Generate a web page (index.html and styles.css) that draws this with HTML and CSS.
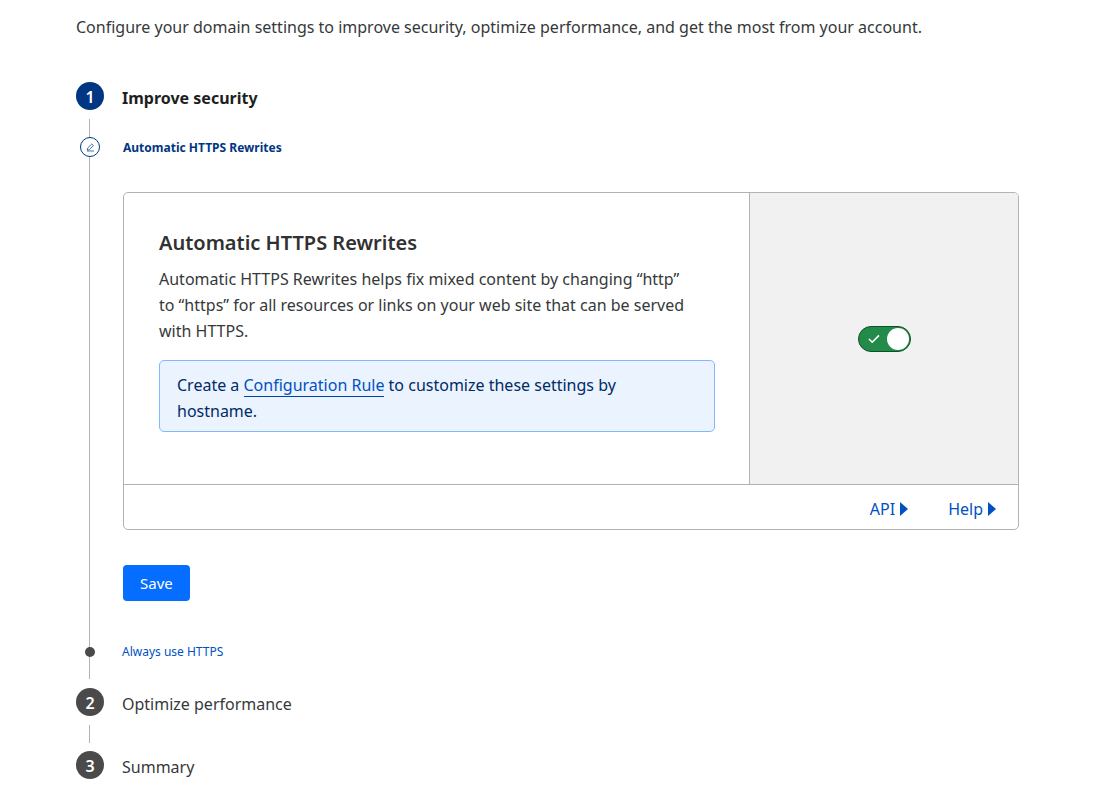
FILE: index.html
```html
<!DOCTYPE html>
<html lang="en">
<head>
<meta charset="utf-8">
<meta name="viewport" content="width=device-width, initial-scale=1">
<title>Domain settings</title>
<link rel="stylesheet" href="styles.css">
</head>
<body>
<main class="page">
  <p class="intro">Configure your domain settings to improve security, optimize performance, and get the most from your account.</p>

  <ol class="steps">
    <li class="step step-current">
      <div class="step-head">
        <span class="step-number">1</span>
        <h2 class="step-title">Improve security</h2>
      </div>
      <div class="step-body">
        <section class="substep substep-current">
          <span class="rail">
            <span class="edit-mark">
              <svg width="9" height="9" viewBox="0 0 9 9" fill="none" stroke="currentColor" stroke-width="0.7" stroke-linejoin="round" aria-hidden="true"><path d="M1.2 7.2 1.7 5.1 5.8 1 7.4 2.5 3.3 6.7Z"/><path d="M1 8h7"/></svg>
            </span>
          </span>
          <h3 class="substep-title">Automatic HTTPS Rewrites</h3>
          <div class="substep-content">
            <article class="card">
              <div class="card-main">
                <div class="card-text">
                  <h4 class="card-title">Automatic HTTPS Rewrites</h4>
                  <p class="card-desc">Automatic HTTPS Rewrites helps fix mixed content by changing “http” to “https” for all resources or links on your web site that can be served with HTTPS.</p>
                  <p class="notice">Create a <a class="notice-link" href="#">Configuration Rule</a> to customize these settings by hostname.</p>
                </div>
                <div class="card-control">
                  <label class="toggle">
                    <input class="toggle-input" type="checkbox" role="switch" checked aria-label="Automatic HTTPS Rewrites">
                    <svg class="toggle-check" width="12" height="10" viewBox="0 0 12 10" fill="none" stroke="currentColor" stroke-width="1.6" aria-hidden="true"><path d="M1 5 4.2 8.2 11 1.4"/></svg>
                  </label>
                </div>
              </div>
              <footer class="card-footer">
                <a class="footer-link" href="#">API<svg width="8" height="14" viewBox="0 0 8 14" fill="currentColor" aria-hidden="true"><path d="M0 0 8 7 0 14Z"/></svg></a>
                <a class="footer-link" href="#">Help<svg width="8" height="14" viewBox="0 0 8 14" fill="currentColor" aria-hidden="true"><path d="M0 0 8 7 0 14Z"/></svg></a>
              </footer>
            </article>
            <button class="save" type="button">Save</button>
          </div>
        </section>
        <div class="substep">
          <span class="rail"><span class="dot"></span></span>
          <a class="substep-link" href="#">Always use HTTPS</a>
        </div>
      </div>
    </li>
    <li class="step">
      <div class="step-head">
        <span class="step-number">2</span>
        <h2 class="step-title">Optimize performance</h2>
      </div>
      <div class="step-body step-gap"></div>
    </li>
    <li class="step">
      <div class="step-head">
        <span class="step-number">3</span>
        <h2 class="step-title">Summary</h2>
      </div>
    </li>
  </ol>
</main>
</body>
</html>
```
FILE: styles.css
```css
* { box-sizing: border-box; }

body {
  margin: 0;
  background: #fff;
  color: #36393a;
  font: 16px/26px "Noto Sans", "Open Sans", sans-serif;
}

h2, h3, h4, p, ol { margin: 0; padding: 0; }
ol { list-style: none; }
a { color: #0051c3; text-decoration: none; }

.page { padding: 14px 81px 20px 76px; }
.intro { margin-bottom: 42px; }

/* Numbered steps */
.step-head { display: flex; align-items: center; gap: 18px; height: 28px; }
.step-number {
  display: flex;
  align-items: center;
  justify-content: center;
  flex: none;
  width: 28px;
  height: 28px;
  padding-top: 2px;
  border-radius: 50%;
  background: #4a4a4a;
  color: #fff;
  font-weight: 600;
}
.step-title { padding-top: 4px; font-size: 16px; font-weight: 400; }
.step-current > .step-head .step-number { background: #003682; }
.step-current > .step-head .step-title { color: #1d1f20; font-weight: 700; }

.step-body {
  margin: 9px 0;
  background: linear-gradient(#b3b3b3, #b3b3b3) 13px 0 / 1px 100% no-repeat;
}
.step-gap { height: 18px; margin-bottom: 8px; }

/* Items inside a step */
.substep {
  display: grid;
  grid-template-columns: 28px minmax(0, 1fr);
  column-gap: 18px;
  align-items: center;
  padding-bottom: 17px;
  font-size: 12px;
  line-height: 20px;
}
.substep-current { column-gap: 19px; padding: 18px 0 41px; }
.substep-title { padding-top: 2px; color: #003682; font-size: 12px; font-weight: 700; line-height: 18px; }
.substep-content { grid-column: 2; font-size: 16px; line-height: 26px; }
.rail { display: flex; justify-content: center; }
.edit-mark {
  display: flex;
  align-items: center;
  justify-content: center;
  width: 20px;
  height: 20px;
  border: 1px solid #003682;
  border-radius: 50%;
  background: #fff;
  color: #003682;
}
.dot { width: 10px; height: 10px; border-radius: 50%; background: #4a4a4a; }

/* Setting card */
.card {
  margin-top: 35px;
  overflow: hidden;
  border: 1px solid #b3b3b3;
  border-radius: 5px;
}
.card-main { display: grid; grid-template-columns: minmax(0, 1fr) 269px; }
.card-text { padding: 35px 34px 52px 35px; }
.card-title { margin-bottom: 8px; color: #313131; font-size: 20px; font-weight: 600; line-height: 30px; }
.card-desc { padding-right: 18px; }
.notice {
  margin-top: 16px;
  padding: 11px 17px 7px;
  border: 1px solid #82b6ff;
  border-radius: 5px;
  background: #ebf3ff;
  color: #002b66;
}
.notice-link { border-bottom: 1px solid #0045a6; }
.card-control {
  display: flex;
  align-items: center;
  justify-content: center;
  border-left: 1px solid #b3b3b3;
  background: #f1f1f1;
}
.card-footer {
  display: flex;
  justify-content: flex-end;
  gap: 40px;
  padding: 11px 22px 7px;
  border-top: 1px solid #b3b3b3;
}
.footer-link { display: flex; align-items: center; gap: 5px; }

/* Switch */
.toggle { display: grid; align-items: center; color: #fff; cursor: pointer; }
.toggle-input, .toggle-check { grid-area: 1 / 1; }
.toggle-input {
  display: flex;
  align-items: center;
  appearance: none;
  width: 53px;
  height: 26px;
  margin: 0;
  padding: 1px;
  border: 1px solid #0f5026;
  border-radius: 13px;
  background: #8a8a8a;
  cursor: pointer;
}
.toggle-input::before {
  content: "";
  width: 22px;
  height: 22px;
  border-radius: 50%;
  background: #fff;
}
.toggle-input:checked { justify-content: flex-end; background: #228b49; }
.toggle-check { margin-left: 10px; pointer-events: none; }

.save {
  display: block;
  margin-top: 35px;
  padding: 8px 17px;
  border: 0;
  border-radius: 4px;
  background: #056dff;
  color: #fff;
  font: 15px/20px "Noto Sans", "Open Sans", sans-serif;
  cursor: pointer;
}
```
